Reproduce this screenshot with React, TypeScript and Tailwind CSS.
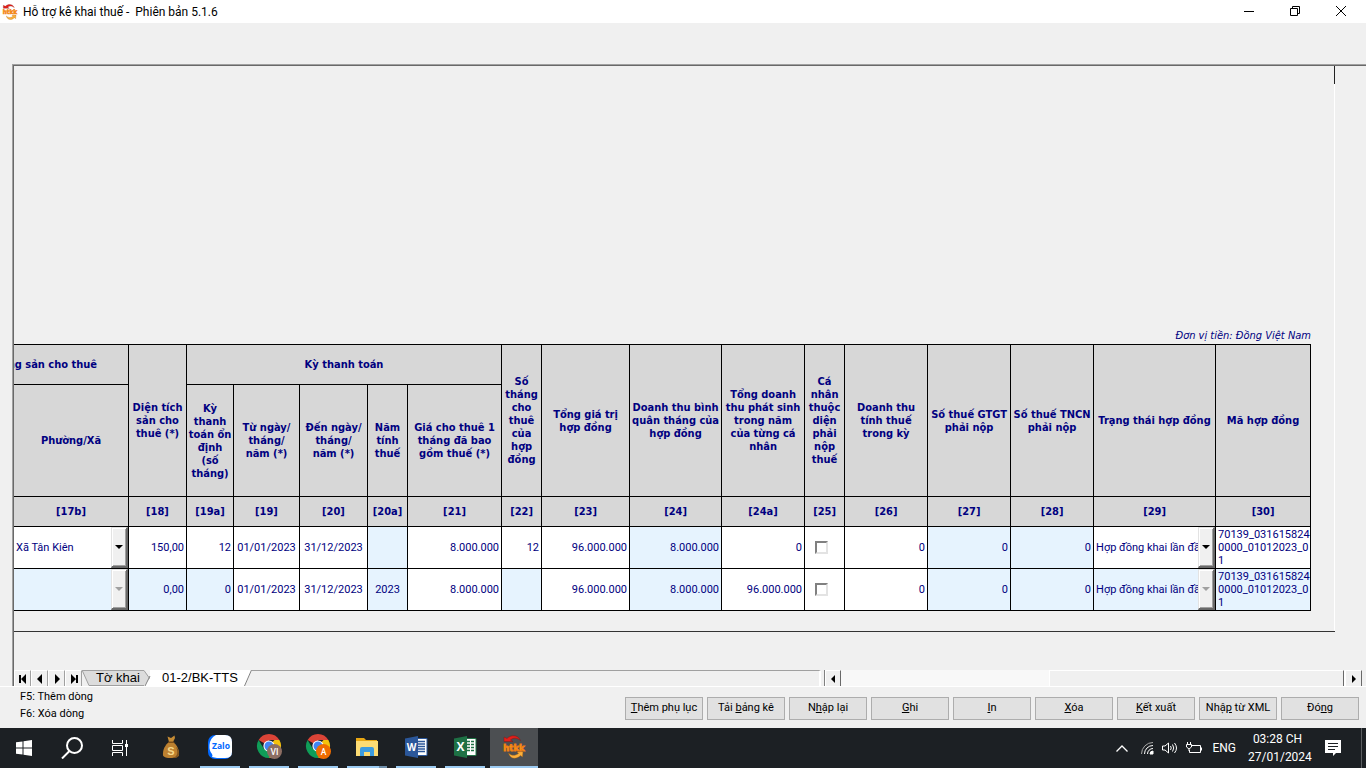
import type { ReactNode } from "react";

type HeaderCell = { lines: string[]; rowSpan?: number };

const columns = [115, 58, 47, 66, 68, 40, 94, 40, 88, 92, 83, 40, 83, 83, 83, 122, 95];

const spanningHeaders: HeaderCell[] = [
  { lines: ["Số", "tháng", "cho", "thuê", "của", "hợp", "đồng"] },
  { lines: ["Tổng giá trị", "hợp đồng"] },
  { lines: ["Doanh thu bình", "quân tháng của", "hợp đồng"] },
  { lines: ["Tổng doanh", "thu phát sinh", "trong năm", "của từng cá", "nhân"] },
  { lines: ["Cá", "nhân", "thuộc", "diện", "phải", "nộp", "thuế"] },
  { lines: ["Doanh thu", "tính thuế", "trong kỳ"] },
  { lines: ["Số thuế GTGT", "phải nộp"] },
  { lines: ["Số thuế TNCN", "phải nộp"] },
  { lines: ["Trạng thái hợp đồng"] },
  { lines: ["Mã hợp đồng"] },
];

const subHeaders: HeaderCell[] = [
  { lines: ["Phường/Xã"] },
  { lines: ["Kỳ", "thanh", "toán ổn", "định", "(số", "tháng)"] },
  { lines: ["Từ ngày/", "tháng/", "năm (*)"] },
  { lines: ["Đến ngày/", "tháng/", "năm (*)"] },
  { lines: ["Năm", "tính", "thuế"] },
  { lines: ["Giá cho thuê 1", "tháng đã bao", "gồm thuế (*)"] },
];

const codes = [
  "[17b]", "[18]", "[19a]", "[19]", "[20]", "[20a]", "[21]", "[22]", "[23]",
  "[24]", "[24a]", "[25]", "[26]", "[27]", "[28]", "[29]", "[30]",
];

const rows = [
  {
    ward: "Xã Tân Kiên",
    locked: false,
    area: "150,00",
    period: "12",
    from: "01/01/2023",
    to: "31/12/2023",
    year: "",
    price: "8.000.000",
    months: "12",
    total: "96.000.000",
    average: "8.000.000",
    yearly: "0",
  },
  {
    ward: "",
    locked: true,
    area: "0,00",
    period: "0",
    from: "01/01/2023",
    to: "31/12/2023",
    year: "2023",
    price: "8.000.000",
    months: "",
    total: "96.000.000",
    average: "8.000.000",
    yearly: "96.000.000",
  },
];

const actions: [string, string, string][] = [
  ["", "T", "hêm phụ lục"],
  ["Tải ", "b", "ảng kê"],
  ["N", "h", "ập lại"],
  ["", "G", "hi"],
  ["", "I", "n"],
  ["", "X", "óa"],
  ["", "K", "ết xuất"],
  ["Nhậ", "p", " từ XML"],
  ["Đó", "n", "g"],
];

function HtkkIcon({ className }: { className: string }) {
  return (
    <svg viewBox="0 0 24 24" className={className} aria-hidden>
      <path d="M2 2L5 3.500C9 -.5 16 -.5 18.500 5.500C15 2.500 11 2.500 8.500 5L11 6.500H2Z" fill="#e3201b" stroke="#7d0f0c" strokeWidth=".4" />
      <path d="M15 17L21 16.500L20.500 22L18.500 20.500C14 25 8 24 6.500 18C9.500 21 13 21 16.500 18.500Z" fill="#fbb03b" stroke="#a85a08" strokeWidth=".4" />
      <text x="12" y="15.500" textAnchor="middle" fontSize="9.500" fontWeight="900" fontFamily="DejaVu Sans Condensed, sans-serif" fill="#ffa51f" stroke="#f07c10" strokeWidth=".8">
        htkk
      </text>
    </svg>
  );
}

function Th({ lines, rowSpan }: HeaderCell) {
  return (
    <th rowSpan={rowSpan} className="border-r border-b border-black p-0 text-center align-middle font-bold whitespace-nowrap">
      {lines.map((line) => (
        <span key={line} className="-mx-2 block">{line}</span>
      ))}
    </th>
  );
}

function Td({ children, locked, align = "text-right" }: { children?: ReactNode; locked?: boolean; align?: string }) {
  return (
    <td className={`border-r border-b border-black px-0.5 py-0 align-middle ${align} ${locked ? "bg-[#e6f3fe]" : "bg-white"}`}>
      {children}
    </td>
  );
}

function ComboCell({ label, value, locked }: { label: string; value: string; locked: boolean }) {
  return (
    <td className={`border-r border-b border-black p-0 ${locked ? "bg-[#e6f3fe]" : "bg-white"}`}>
      <div className="flex h-[41px]">
        <select
          aria-label={label}
          disabled={locked}
          className="min-w-0 flex-1 appearance-none bg-transparent pl-0.5 text-[#000080] outline-none disabled:opacity-100"
        >
          <option>{value}</option>
        </select>
        <span className="flex w-[17px] shrink-0 items-center justify-center border-t border-r-2 border-b-2 border-l border-t-[#e3e3e3] border-r-[#696969] border-b-[#696969] border-l-[#e3e3e3] bg-[#f0f0f0] shadow-[inset_1px_1px_0_#fff,inset_-1px_-1px_0_#a0a0a0]">
          <svg viewBox="0 0 8 4" className="h-1 w-2" aria-hidden>
            <path d="M0 0H8L4 4Z" fill={locked ? "#a0a0a0" : "#000"} />
          </svg>
        </span>
      </div>
    </td>
  );
}

function TaxTable() {
  return (
    <table className="w-full table-fixed border-separate border-spacing-0 border-t border-black text-[11px] leading-[13px] text-[#000080]">
      <colgroup>
        {columns.map((width, i) => (
          <col key={i} style={{ width }} />
        ))}
      </colgroup>
      <thead className="bg-[#d7d7d7]">
        <tr className="h-10">
          <th className="overflow-hidden border-r border-b border-black p-0 font-bold whitespace-nowrap">
            <div className="flex justify-end pr-[31px]">ng sản cho thuê</div>
          </th>
          <Th rowSpan={2} lines={["Diện tích", "sản cho", "thuê (*)"]} />
          <th colSpan={5} className="border-r border-b border-black p-0 text-center font-bold">Kỳ thanh toán</th>
          {spanningHeaders.map((cell) => (
            <Th key={cell.lines.join(" ")} rowSpan={2} lines={cell.lines} />
          ))}
        </tr>
        <tr className="h-28">
          {subHeaders.map((cell) => (
            <Th key={cell.lines.join(" ")} lines={cell.lines} />
          ))}
        </tr>
        <tr className="h-[30px]">
          {codes.map((code) => (
            <Th key={code} lines={[code]} />
          ))}
        </tr>
      </thead>
      <tbody className="font-['Roboto',sans-serif]">
        {rows.map((row, i) => (
          <tr key={i} className="h-[42px]">
            <ComboCell label="Phường/Xã" value={row.ward} locked={row.locked} />
            <Td locked={row.locked}>{row.area}</Td>
            <Td locked={row.locked}>{row.period}</Td>
            <Td align="text-center">{row.from}</Td>
            <Td align="text-center">{row.to}</Td>
            <Td align="text-center" locked>{row.year}</Td>
            <Td>{row.price}</Td>
            <Td locked={row.locked}>{row.months}</Td>
            <Td>{row.total}</Td>
            <Td locked>{row.average}</Td>
            <Td>{row.yearly}</Td>
            <Td align="text-left">
              <input
                type="checkbox"
                aria-label="Cá nhân thuộc diện phải nộp thuế"
                className="ml-2 block size-[13px] appearance-none border-2 border-t-[#808080] border-r-[#e3e3e3] border-b-[#e3e3e3] border-l-[#808080] bg-white"
              />
            </Td>
            <Td>0</Td>
            <Td locked>0</Td>
            <Td locked>0</Td>
            <ComboCell label="Trạng thái hợp đồng" value="Hợp đồng khai lần đầu" locked={row.locked} />
            <Td align="text-left" locked={row.locked}>
              70139_031615824
              <br />
              0000_01012023_0
              <br />1
            </Td>
          </tr>
        ))}
      </tbody>
    </table>
  );
}

const navIcons = [
  { label: "Trang đầu", path: "M1 1H3V9H1ZM8 0V10L3 5Z" },
  { label: "Trang trước", path: "M7 0V10L2 5Z" },
  { label: "Trang sau", path: "M3 0V10L8 5Z" },
  { label: "Trang cuối", path: "M7 1H9V9H7ZM2 0V10L7 5Z" },
];

function SheetBar() {
  return (
    <div className="flex h-4 font-['Liberation_Sans',sans-serif] text-[13px] leading-4 text-black">
      {navIcons.map((nav) => (
        <button key={nav.label} aria-label={nav.label} className="flex w-[17px] items-center justify-center border-t border-r border-l border-t-white border-r-[#a0a0a0] border-l-white">
          <svg viewBox="0 0 10 10" className="size-2.5" aria-hidden>
            <path d={nav.path} />
          </svg>
        </button>
      ))}
      <button className="relative w-[68px] pl-1">
        <svg viewBox="0 0 68 16" className="absolute inset-0 h-4 w-full" aria-hidden>
          <path d="M0 .5H62L68 8V15.500H7Z" fill="#dcdcdc" />
          <path d="M0 .5H62L68 9M0 0L7 15.500H62" fill="none" stroke="#a0a0a0" />
        </svg>
        <span className="relative">Tờ khai</span>
      </button>
      <button className="relative -ml-1.5 w-[108px] pl-1">
        <svg viewBox="0 0 108 16" className="absolute inset-0 h-4 w-full" aria-hidden>
          <path d="M6 0H108L101 16H0L6 8Z" fill="#fff" />
          <path d="M107.500 0L100.500 16M6 6L1 16" stroke="#808080" />
        </svg>
        <span className="relative">01-2/BK-TTS</span>
      </button>
      <div className="flex-570 border-t border-r-2 border-t-[#a0a0a0] border-r-white" />
      <div className="w-1 border-r border-[#808080]" />
      <button aria-label="Cuộn trái" className="flex w-4 items-center justify-center border-t border-r border-l border-t-white border-r-[#696969] border-l-white">
        <svg viewBox="0 0 4 8" className="h-2 w-1" aria-hidden>
          <path d="M4 0V8L0 4Z" />
        </svg>
      </button>
      <div className="flex-209 bg-[#f8f8f8]" />
      <div className="flex-294 border-t border-r border-l border-t-white border-r-[#696969] border-l-white" />
      <button aria-label="Cuộn phải" className="mr-1 flex w-[18px] items-center justify-center border-t border-r border-l-2 border-t-white border-r-[#696969] border-l-white">
        <svg viewBox="0 0 4 8" className="h-2 w-1" aria-hidden>
          <path d="M0 0V8L4 4Z" />
        </svg>
      </button>
    </div>
  );
}

function ChromeIcon({ badge, color }: { badge: string; color: string }) {
  return (
    <svg viewBox="0 0 28 28" className="ml-0.5 size-7" aria-hidden>
      <path d="M13 13L2.600 7A12 12 0 0 1 23.400 7H13Z" fill="#db4437" />
      <path d="M13 13L18.500 7H23.400A12 12 0 0 1 13 25L18 16Z" fill="#f4c20d" />
      <path d="M13 13L8 16L2.600 7A12 12 0 0 0 13 25L17 17Z" fill="#0f9d58" />
      <circle cx="13" cy="13" r="5.600" fill="#fff" />
      <circle cx="13" cy="13" r="4.500" fill="#4285f4" />
      <circle cx="18.500" cy="18.500" r="7.500" fill={color} />
      <text x="18.500" y="21.500" textAnchor="middle" fontSize="8.500" fontWeight="500" fontFamily="Roboto, sans-serif" fill="#fff">
        {badge}
      </text>
    </svg>
  );
}

function OfficeIcon({ letter, color, dark }: { letter: string; color: string; dark: string }) {
  return (
    <svg viewBox="0 0 24 24" className="size-6" aria-hidden>
      <path d="M12 3.500H23V20.500H12Z" fill="#fff" stroke={color} />
      {letter === "W" ? (
        <path d="M14 6.500H21M14 9H21M14 11.500H21M14 14H21M14 16.500H21" stroke={color} strokeWidth="1.300" />
      ) : (
        <path d="M14 6.500H17M18 6.500H21M14 9.500H17M18 9.500H21M14 12.500H17M18 12.500H21M14 15.500H17M18 15.500H21" stroke={color} strokeWidth="1.600" />
      )}
      <path d="M1 3.500L14 1V23L1 20.500Z" fill={dark} />
      <text x="7.500" y="16" textAnchor="middle" fontSize={letter === "W" ? 10 : 12} fontWeight="700" fontFamily="Open Sans, sans-serif" fill="#fff">
        {letter}
      </text>
    </svg>
  );
}

function BagIcon() {
  return (
    <svg viewBox="0 0 24 24" className="size-6" aria-hidden>
      <path d="M8.500 1.500L12 3L15.500 .5L16 3L14 7H10Z" fill="#c58b35" />
      <path d="M10 7H14C18 10 20.500 15 20 20C19.500 24 5 24 4 20.500C3.500 15 6 10 10 7Z" fill="#bd8130" />
      <path d="M9.500 6.500H15L15.500 8H9Z" fill="#7a4d18" />
      <path d="M17 12C19 16 19.500 22 13 23C19 23.500 20 21 20 19C20 16 19 13 17 12Z" fill="#7f531d" />
      <text x="12" y="20" textAnchor="middle" fontSize="11" fontWeight="700" fontFamily="Liberation Sans, sans-serif" fill="#f6d98b">
        S
      </text>
    </svg>
  );
}

function ZaloIcon() {
  return (
    <svg viewBox="0 0 24 24" className="size-6" aria-hidden>
      <rect width="24" height="24" rx="7" fill="#0068ff" />
      <path d="M8 0H17Q24 0 24 7V17Q24 23 17 23H9L4 22Q5 21 4 19Q1 16 1.500 10Q2 3 8 0Z" fill="#fff" />
      <text x="13" y="14" textAnchor="middle" fontSize="8.500" fontWeight="700" fontFamily="Open Sans, sans-serif" fill="#0068ff">
        Zalo
      </text>
    </svg>
  );
}

function FolderIcon() {
  return (
    <svg viewBox="0 0 24 24" className="size-6" aria-hidden>
      <path d="M1 3H9L11 5H22V8H1Z" fill="#e8a713" />
      <path d="M1 6H23V21H1Z" fill="#fddc74" />
      <path d="M5 21V14Q5 12 7 12H17Q19 12 19 14V21H15V17H9V21Z" fill="#3d9ce0" />
    </svg>
  );
}

const apps: { name: string; icon: ReactNode; state: "idle" | "open" | "active" | "grouped" }[] = [
  { name: "Money", icon: <BagIcon />, state: "idle" },
  { name: "Zalo", icon: <ZaloIcon />, state: "open" },
  { name: "Chrome VI", icon: <ChromeIcon badge="VI" color="#8d6e63" />, state: "open" },
  { name: "Chrome A", icon: <ChromeIcon badge="A" color="#ef6c00" />, state: "open" },
  { name: "File Explorer", icon: <FolderIcon />, state: "grouped" },
  { name: "Word", icon: <OfficeIcon letter="W" color="#2b579a" dark="#2b579a" />, state: "open" },
  { name: "Excel", icon: <OfficeIcon letter="X" color="#217346" dark="#1e7145" />, state: "open" },
  { name: "HTKK", icon: <HtkkIcon className="size-6" />, state: "active" },
];

const underlines = {
  idle: "w-10",
  open: "w-10 bg-[#9ccbf2]",
  grouped: "w-10 border-r-8 border-[#6f8fab] bg-[#9ccbf2]",
  active: "w-full bg-[#9ccbf2]",
};

function Taskbar() {
  return (
    <footer className="flex h-10 items-stretch bg-[#1c2024] text-white">
      <button aria-label="Start" className="flex w-12 items-center justify-center">
        <svg viewBox="0 0 16 16" className="size-4" fill="#fff" aria-hidden>
          <path d="M0 2.300L6.500 1.400V7.500H0ZM7.500 1.200L16 0V7.500H7.500ZM0 8.500H6.500V14.600L0 13.700ZM7.500 8.500H16V16L7.500 14.800Z" />
        </svg>
      </button>
      <button aria-label="Search" className="flex w-12 items-center justify-center">
        <svg viewBox="0 0 22 22" className="size-[22px]" fill="none" stroke="#fff" strokeWidth="2" aria-hidden>
          <circle cx="13.500" cy="8.500" r="7.500" />
          <path d="M8.500 14L1 21.500" />
        </svg>
      </button>
      <button aria-label="Task View" className="flex w-12 items-center justify-center">
        <svg viewBox="0 0 16 16" className="size-4" fill="none" stroke="#fff" aria-hidden>
          <path d="M.5 0V3.500H10.500V0M.5 16V12.500H10.500V16M.5 5.500H10.500V10.500H.5ZM14.500 0V16" />
          <path d="M13 4H16V7H13Z" fill="#fff" stroke="none" />
        </svg>
      </button>
      <nav className="ml-[3px] flex gap-px">
        {apps.map((app) => (
          <button
            key={app.name}
            aria-label={app.name}
            className={`flex w-12 flex-col items-center ${app.state === "active" ? "bg-[#4c4f52]" : ""}`}
          >
            <span className="flex flex-1 items-center">{app.icon}</span>
            <span className={`h-0.5 ${underlines[app.state]}`} />
          </button>
        ))}
      </nav>
      <div className="ml-auto flex items-center font-['Roboto',sans-serif] text-xs">
        <svg viewBox="0 0 12 7" className="mr-3 h-[7px] w-3" fill="none" stroke="#fff" strokeWidth="1.300" aria-hidden>
          <path d="M.5 6.500L6 1L11.500 6.500" />
        </svg>
        <svg viewBox="0 0 14 14" className="mr-2 size-3.5" fill="none" stroke="#fff" aria-hidden>
          <path d="M1.500 13A11.500 11.500 0 0 1 13 1.500" stroke="#aaa" />
          <path d="M4.500 13A8.500 8.500 0 0 1 13 4.500M7.500 13A5.500 5.500 0 0 1 13 7.500" />
          <path d="M10 13A3 3 0 0 1 13 10V13Z" fill="#fff" />
        </svg>
        <svg viewBox="0 0 16 14" className="mr-2 h-3.5 w-4" fill="none" stroke="#fff" aria-hidden>
          <path d="M.5 5V9H3L6.500 12V2L3 5ZM8.500 5Q10 7 8.500 9M10.500 3.500Q13 7 10.500 10.500M12.500 2Q16.500 7 12.500 12" />
        </svg>
        <svg viewBox="0 0 16 12" className="mr-2.5 h-3 w-4" fill="none" stroke="#fff" aria-hidden>
          <path d="M6 3.500H14.500V10.500H3.500V8M15.500 5.500V8.500M1.500 0V2M4.500 0V2M.5 2.500H5.500V5L3 7L.5 5ZM3 7V9" />
        </svg>
        <span className="mr-3">ENG</span>
        <time className="w-[59px] text-center leading-[18px] whitespace-nowrap">
          <span className="block">03:28 CH</span>
          <span className="block">27/01/2024</span>
        </time>
        <button aria-label="Notifications" className="mr-5 ml-[18px]">
          <svg viewBox="0 0 16 16" className="size-4" aria-hidden>
            <path d="M0 0H16V13H11L8 16V13H0Z" fill="#fff" />
            <path d="M3 3.500H13M3 6.500H13M3 9.500H10" stroke="#1c2024" />
          </svg>
        </button>
        <div className="h-10 w-[5px] border-l border-[#5b5e61]" />
      </div>
    </footer>
  );
}

export default function App() {
  return (
    <div className="flex min-h-screen flex-col bg-[#f0f0f0] font-['DejaVu_Sans_Condensed','DejaVu_Sans',sans-serif]">
      <header className="flex h-[23px] items-center bg-white text-black">
        <HtkkIcon className="ml-0.5 size-4" />
        <h1 className="ml-[5px] font-['Roboto',sans-serif] text-xs whitespace-pre">Hỗ trợ kê khai thuế -  Phiên bản 5.1.6</h1>
        <div className="mr-5 mb-0.5 ml-auto flex items-center gap-9">
          <button aria-label="Minimize">
            <svg viewBox="0 0 10 10" className="size-2.5" aria-hidden>
              <path d="M0 5.500H10" stroke="#000" />
            </svg>
          </button>
          <button aria-label="Restore">
            <svg viewBox="0 0 10 10" className="size-2.5" fill="none" stroke="#000" aria-hidden>
              <path d="M.5 2.500H7.500V9.500H.5ZM2.500 2.500V.5H9.500V7.500H7.500" />
            </svg>
          </button>
          <button aria-label="Close">
            <svg viewBox="0 0 10 10" className="size-2.5" stroke="#000" aria-hidden>
              <path d="M0 0L10 10M10 0L0 10" />
            </svg>
          </button>
        </div>
      </header>

      <main className="mt-[41px] ml-3 flex flex-1 flex-col border-t border-l border-[#a0a0a0]">
        <div className="flex flex-1 flex-col border-t border-l border-[#696969]">
          <section className="mr-[31px] flex border-b border-[#333]">
            <div className="min-w-0 flex-1 pt-[262px] pr-[23px] pb-5">
              <p className="text-right text-[11px] leading-4 text-[#000080] italic">Đơn vị tiền: Đồng Việt Nam</p>
              <TaxTable />
            </div>
            <div className="flex w-px flex-col bg-white">
              <div className="h-[18px] bg-[#222]" />
            </div>
          </section>
          <div className="flex-1" />
          <SheetBar />
        </div>
      </main>

      <div className="flex items-start justify-between border-t border-white pt-px pr-[7px] pb-1.5 pl-5 font-['Roboto',sans-serif] text-[11px] text-black">
        <div className="leading-[17px]">
          <p>F5: Thêm dòng</p>
          <p>F6: Xóa dòng</p>
        </div>
        <div className="flex gap-1 pt-[9px]">
          {actions.map(([before, key, after]) => (
            <button key={before + key + after} className="h-[23px] w-[78px] border border-[#adadad] bg-[#e1e1e1] whitespace-nowrap">
              {before}
              <u>{key}</u>
              {after}
            </button>
          ))}
        </div>
      </div>

      <Taskbar />
    </div>
  );
}
